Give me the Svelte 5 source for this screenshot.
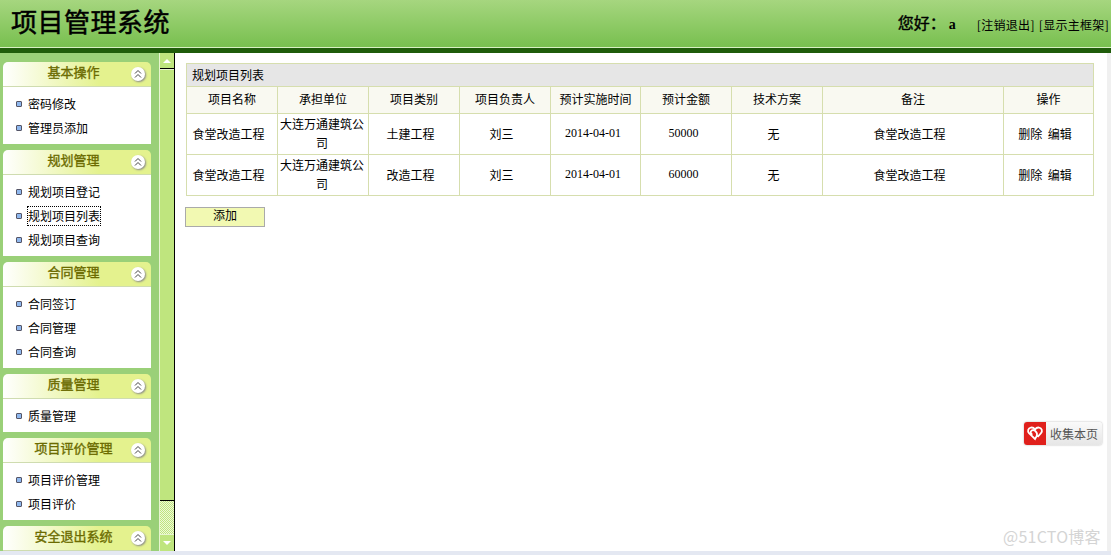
<script>
  const MENUS = [
    { title: '基本操作', items: ['密码修改', '管理员添加'] },
    { title: '规划管理', items: ['规划项目登记', '规划项目列表', '规划项目查询'] },
    { title: '合同管理', items: ['合同签订', '合同管理', '合同查询'] },
    { title: '质量管理', items: ['质量管理'] },
    { title: '项目评价管理', items: ['项目评价管理', '项目评价'] },
    { title: '安全退出系统', items: [] },
  ];

  const COLUMNS = [
    { label: '项目名称', w: 91 },
    { label: '承担单位', w: 91 },
    { label: '项目类别', w: 91 },
    { label: '项目负责人', w: 91 },
    { label: '预计实施时间', w: 90 },
    { label: '预计金额', w: 91 },
    { label: '技术方案', w: 91 },
    { label: '备注', w: 181 },
    { label: '操作', w: 90 },
  ];

  const ROWS = [
    { name: '食堂改造工程', unit: '大连万通建筑公司', type: '土建工程', owner: '刘三', date: '2014-04-01', amount: '50000', plan: '无', note: '食堂改造工程' },
    { name: '食堂改造工程', unit: '大连万通建筑公司', type: '改造工程', owner: '刘三', date: '2014-04-01', amount: '60000', plan: '无', note: '食堂改造工程' },
  ];
</script>

<div class="page">
  <header class="top">
    <h1 class="title">项目管理系统</h1>
    <div class="user">
      <span class="hello">您好：</span><span class="name">a</span>
      <a href="#logout" class="link">[注销退出]</a>
      <a href="#main" class="link">[显示主框架]</a>
    </div>
  </header>

  <div class="middle">
    <aside class="side">
      {#each MENUS as m}
        <section class="panel">
          <div class="panel-head">
            <span class="panel-title">{m.title}</span>
            <span class="fold">
              <svg width="10" height="10" viewBox="0 0 10 10"><path d="M2 4.5 5 1.5 8 4.5M2 8.5 5 5.5 8 8.5" fill="none" stroke="#444" stroke-width="1"/></svg>
            </span>
          </div>
          {#if m.items.length}
            <ul class="panel-body">
              {#each m.items as it}
                <li><i class="dot"></i><a href="#item" class:focus={it === '规划项目列表'}>{it}</a></li>
              {/each}
            </ul>
          {/if}
        </section>
      {/each}
    </aside>

    <div class="scroll">
      <div class="sb-btn"><span class="up"></span></div>
      <div class="sb-thumb"></div>
      <div class="sb-track"></div>
      <div class="sb-btn down-btn"><span class="down"></span></div>
    </div>

    <main class="content">
      <table class="list">
        <colgroup>
          {#each COLUMNS as c}
            <col style="width:{c.w}px" />
          {/each}
        </colgroup>
        <thead>
          <tr><th colspan="9" class="caption">规划项目列表</th></tr>
          <tr class="heads">
            {#each COLUMNS as c}
              <th>{c.label}</th>
            {/each}
          </tr>
        </thead>
        <tbody>
          {#each ROWS as r}
            <tr>
              <td>{r.name}</td>
              <td class="unit">{r.unit}</td>
              <td>{r.type}</td>
              <td>{r.owner}</td>
              <td class="num">{r.date}</td>
              <td class="num">{r.amount}</td>
              <td>{r.plan}</td>
              <td>{r.note}</td>
              <td>删除&nbsp; 编辑</td>
            </tr>
          {/each}
        </tbody>
      </table>
      <button class="add">添加</button>

      <div class="collect">
        <span class="heart">
          <svg width="20" height="18" viewBox="0 0 20 18"><path d="M7.5 9.5C5.5 9 5 6.5 6.8 5.4 8.6 4.4 10.5 5.8 11.5 7.5 12.4 9 12.2 11 10.2 13.6L10 14 4 8.2C2.2 6.2 3.2 3 5.8 2.6 7.6 2.3 9 3 10 4.4 11 3 12.6 2.3 14.2 2.6 16.8 3 17.8 6.2 16 8.2L12.6 12" fill="none" stroke="#fff" stroke-width="1.8"/></svg>
        </span>
        <span class="collect-text">收集本页</span>
      </div>
      <div class="mark">@51CTO博客</div>
    </main>
    <div class="edge"></div>
  </div>
  <div class="bottom"></div>
</div>

<style>
  :global(body) { margin: 0; background: #fff; }

  .page {
    width: 1111px;
    height: 555px;
    display: flex;
    flex-direction: column;
    overflow: hidden;
    font-family: "Noto Sans CJK SC", "Liberation Sans", sans-serif;
    font-size: 12px;
    color: #000;
  }

  /* header */
  .top {
    height: 44px;
    flex: none;
    display: flex;
    align-items: center;
    justify-content: space-between;
    padding: 0 2px 4px 11px;
    background: linear-gradient(#a6d67f, #77bf4e);
    border-bottom: 5px solid #1f5c0a;
    box-shadow: inset 0 -1px 0 #d8efc2;
  }
  .title {
    margin: 0 0 2px;
    font-size: 26px;
    font-weight: 400;
    -webkit-text-stroke: 0.5px #000;
    letter-spacing: 0.5px;
    line-height: 44px;
  }
  .user { display: flex; align-items: center; padding-top: 3px; }
  .hello { font-size: 16px; font-weight: 400; -webkit-text-stroke: 0.4px #000; margin: 0 3px 4px 0; }
  .name { font-family: "Liberation Serif", serif; font-size: 14px; font-weight: 700; margin: 2px 21px 0 0; }
  .link { color: #000; text-decoration: none; font-size: 12px; margin: 1px 0 0 4px; letter-spacing: 0.3px; }
  .name + .link { margin-left: 0; }

  .middle { flex: 1; display: flex; min-height: 0; }

  /* sidebar */
  .side {
    width: 148px;
    flex: none;
    background: #9ad078;
    padding: 9px 8px 0 3px;
    display: flex;
    flex-direction: column;
    gap: 6px;
    overflow: hidden;
  }
  .panel { flex: none; }
  .panel-head {
    height: 24px;
    position: relative;
    display: flex;
    align-items: center;
    justify-content: center;
    border-radius: 5px 5px 0 0;
    background: linear-gradient(90deg, #fff, #e4f28e 65%, #e4f28e);
    border-bottom: 1px solid #cfdcb0;
  }
  .panel-title {
    font-size: 13px;
    font-weight: 400;
    -webkit-text-stroke: 0.35px #6b6b00;
    color: #6b6b00;
    margin: 0 7px 6px 0;
  }
  .fold {
    position: absolute;
    right: 6px;
    top: 5px;
    width: 14px;
    height: 14px;
    border-radius: 50%;
    background: #fff;
    box-shadow: 1px 1px 2px #888;
    display: flex;
    align-items: center;
    justify-content: center;
  }
  .panel-body {
    margin: 0;
    padding: 5px 0 4px 13px;
    list-style: none;
    background: #fff;
  }
  .panel-body li { height: 24px; display: flex; align-items: center; }
  .dot {
    width: 4px;
    height: 4px;
    border: 1px solid #556;
    border-radius: 1px;
    background: #8fb8ee;
    margin-right: 6px;
  }
  .panel-body a { color: #000; text-decoration: none; line-height: 18px; }
  .panel-body a.focus { outline: 1px dotted #000; }

  /* fake scrollbar */
  .scroll {
    width: 14px;
    flex: none;
    display: flex;
    flex-direction: column;
    background: #bfe57e;
    border-right: 1px solid #000;
    border-left: 1px solid #e8f5d0;
    padding-bottom: 1px;
  }
  .sb-btn {
    height: 15px;
    flex: none;
    display: flex;
    align-items: center;
    justify-content: center;
    border-bottom: 1px solid #000;
  }
  .down-btn { border-bottom: 0; border-top: 1px solid #e8f5d0; }
  .up, .down { width: 0; height: 0; border-left: 4px solid transparent; border-right: 4px solid transparent; }
  .up { border-bottom: 4px solid #fff; }
  .down { border-top: 4px solid #fff; }
  .sb-thumb { flex: 1; border-bottom: 1px solid #000; border-top: 1px solid #e8f5d0; }
  .sb-track {
    height: 33px;
    flex: none;
    background: repeating-conic-gradient(#bfe57e 0 25%, #eef8d8 0 50%) 0 0 / 2px 2px;
  }

  /* main */
  .content {
    flex: 1;
    position: relative;
    background: #fff;
    padding: 10px 0 0 10px;
    min-width: 0;
  }
  .list {
    width: 908px;
    margin-left: 1px;
    border-collapse: collapse;
    table-layout: fixed;
  }
  .list th, .list td {
    border: 1px solid #d6deae;
    padding: 0;
    text-align: center;
    font-weight: 400;
  }
  .list th.caption {
    height: 20px;
    padding: 0 0 2px 5px;
    background: #e6e6e6;
    text-align: left;
  }
  .heads th { height: 24px; padding-bottom: 2px; background: #f9f9f1; line-height: 20px; }
  .list td { height: 38px; padding: 0 7px 2px 0; line-height: 19px; }
  .list td.unit { padding: 0 4px 2px 2px; }
  .list td.num { font-family: "Liberation Serif", serif; padding: 0 5px 1px 0; }

  .add {
    display: block;
    width: 80px;
    height: 20px;
    margin-top: 11px;
    padding: 0 0 4px;
    background: #f2f9b2;
    border: 1px solid #aaa;
    font: inherit;
    line-height: 14px;
  }

  .collect {
    position: absolute;
    left: 849px;
    top: 369px;
    width: 78px;
    height: 23px;
    display: flex;
    border-radius: 3px;
    background: linear-gradient(#fafafa, #e6e6e6);
    box-shadow: 0 0 2px #aaa;
    overflow: hidden;
  }
  .heart {
    width: 22px;
    display: flex;
    align-items: center;
    justify-content: center;
    background: #e0201c;
  }
  .collect-text { margin-left: 4px; line-height: 23px; color: #555; }
  .mark {
    position: absolute;
    left: 828px;
    top: 472px;
    font-size: 16px;
    letter-spacing: 0.25px;
    line-height: 22px;
    color: #d4d4d4;
    white-space: nowrap;
  }

  .edge { width: 4px; flex: none; background: #f0f0f0; }
  .bottom { height: 4px; flex: none; background: #e4e8f2; }
</style>
